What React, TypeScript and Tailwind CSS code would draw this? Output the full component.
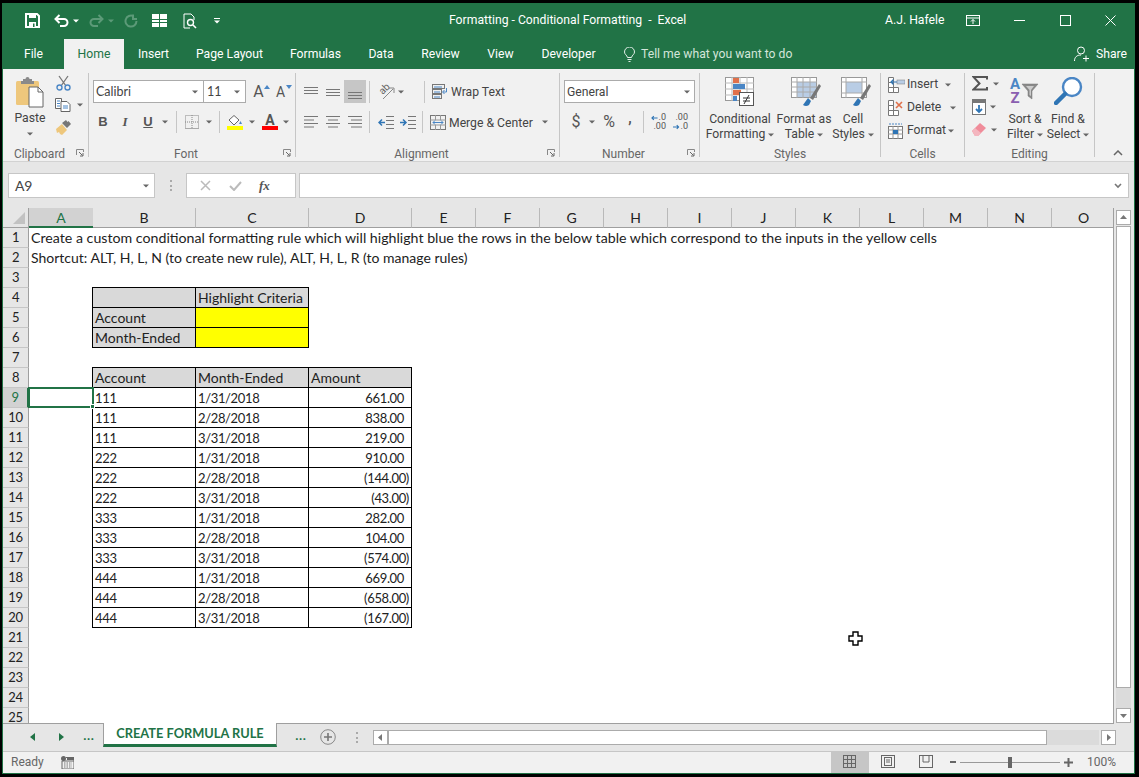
import React from 'react';

const GREEN = '#217346';

const Caret = ({ className = '', color = '#666' }: { className?: string; color?: string }) => (
  <svg width="6" height="4" viewBox="0 0 6 4" className={`shrink-0 ${className}`}>
    <path d="M0 0.5h6L3 3.5z" fill={color} />
  </svg>
);

const Sep = ({ className = '' }: { className?: string }) => <div className={`w-px h-[22px] bg-[#c6c6c6] shrink-0 ${className}`} />;

const Launcher = () => (
  <svg width="8" height="8" viewBox="0 0 8 8" className="shrink-0">
    <path d="M0.5 6V0.5H7.5V3" fill="none" stroke="#888" />
    <path d="M3 3l3.5 3.5M7 4v3H4" fill="none" stroke="#666" />
  </svg>
);

const Group = ({ label, w, children, launcher }: { label: string; w: string; children: React.ReactNode; launcher?: boolean }) => (
  <div className={`${w} h-[84px] mt-[4px] border-r border-[#c6c6c6] flex flex-col shrink-0`}>
    <div className="h-[72px] shrink-0">{children}</div>
    <div className="h-[16px] -mb-[4px] shrink-0 flex items-center relative">
      <span className="flex-1 text-center text-[12px] leading-none pt-px text-[#666]">{label}</span>
      {launcher && <div className="mr-[4px] flex items-center"><Launcher /></div>}
    </div>
  </div>
);

// ---- title bar icons
const SaveIcon = () => (
  <svg width="15" height="15" viewBox="0 0 15 15"><path d="M1 1h11l2 2v11H1z" fill="none" stroke="#fff" strokeWidth="2" /><rect x="4" y="1" width="7" height="4" fill="#fff" /><rect x="4" y="9" width="7" height="5" fill="#fff" /><rect x="8" y="10.5" width="1.5" height="3.5" fill={GREEN} /></svg>
);
const UndoIcon = ({ c = '#fff', flip = false }: { c?: string; flip?: boolean }) => (
  <svg width="15" height="13" viewBox="0 0 15 13" className={flip ? '-scale-x-100' : ''}><path d="M2 5h8a3.5 3.5 0 0 1 0 7H6M5.5 1L1.5 5l4 4" fill="none" stroke={c} strokeWidth="2" /></svg>
);
const RepeatIcon = () => (
  <svg width="14" height="14" viewBox="0 0 14 14"><path d="M9.5 2.2A5.5 5.5 0 1 0 12.5 7M9 0.5V5h4" fill="none" stroke="#5c9a78" strokeWidth="2" /></svg>
);
const FormIcon = () => (
  <svg width="15" height="13" viewBox="0 0 15 13"><path d="M0 0h7v5H0zM8 0h7v5H8zM0 6h7v2H0zM8 6h7v2H8zM0 9h7v4H0zM8 9h7v4H8z" fill="#fff" /></svg>
);
const PreviewIcon = () => (
  <svg width="15" height="16" viewBox="0 0 15 16"><path d="M7 15H1V1h7l3 3v3" fill="none" stroke="#fff" /><circle cx="7.5" cy="9.5" r="3" fill="none" stroke="#fff" strokeWidth="1.4" /><path d="M10 12l3 3" stroke="#fff" strokeWidth="1.6" /></svg>
);
const RibbonDisplay = () => (
  <svg width="14" height="11" viewBox="0 0 14 11"><rect x="0.5" y="0.5" width="13" height="10" fill="none" stroke="#fff" /><path d="M0 3h14" stroke="#fff" /><path d="M7 9V4.5M5 6.5l2-2 2 2" fill="none" stroke="#fff" /></svg>
);

// ---- clipboard icons
const PasteIcon = () => (
  <svg width="30" height="31" viewBox="0 0 30 31">
    <rect x="1" y="4" width="23" height="24" rx="1.5" fill="#eec77c" />
    <path d="M8 4V2h2.5a2 2 0 0 1 4 0H17v2h2v3H6V4z" fill="#8a8a8a" />
    <path d="M14 10h9l5 5v15H14z" fill="#fff" stroke="#666" />
    <path d="M23 10v5h5" fill="none" stroke="#666" />
  </svg>
);
const ScissorsIcon = () => (
  <svg width="15" height="16" viewBox="0 0 15 16"><path d="M3 1l7 10M12 1L5 11" stroke="#777" strokeWidth="1.3" /><circle cx="3.5" cy="12.5" r="2.5" fill="none" stroke="#4a86c5" strokeWidth="1.4" /><circle cx="11.5" cy="12.5" r="2.5" fill="none" stroke="#4a86c5" strokeWidth="1.4" /></svg>
);
const CopyIcon = () => (
  <svg width="16" height="14" viewBox="0 0 16 14"><path d="M0.5 0.5h6v10h-6z" fill="#fff" stroke="#666" /><path d="M6 3.5h6l3 3v7H6z" fill="#fff" stroke="#666" /><path d="M2 3h3M2 5.5h3M2 8h3" stroke="#4a86c5" /><path d="M8 8h5M8 10h5" stroke="#4a86c5" /></svg>
);
const BrushIcon = () => (
  <svg width="16" height="15" viewBox="0 0 16 15"><path d="M0 9l6-5 5 6-5 5-2-1-1-2-2 1z" fill="#eec77c" /><path d="M6 3l4-3 1.5 2 1-1 2.5 3-4 4z" fill="#777" /></svg>
);

// ---- font icons
const FontA = ({ up }: { up: boolean }) => (
  <div className="flex items-start w-[17px] h-[16px] text-[#555]">
    <span className={`${up ? 'text-[16px]' : 'text-[14px]'} leading-[16px] w-[11px] text-center`}>A</span>
    <svg width="6" height="4" viewBox="0 0 6 4" className="mt-[1px]"><path d={up ? 'M0 4l3-4 3 4z' : 'M0 0h6L3 4z'} fill="#4a86c5" /></svg>
  </div>
);
const BordersIcon = () => (
  <svg width="14" height="14" viewBox="0 0 14 14"><rect x="0.5" y="0.5" width="13" height="13" fill="none" stroke="#888" strokeDasharray="1 1" /><path d="M7 0v14M0 7h14" stroke="#888" strokeDasharray="1 1" /><path d="M0 13.5h14" stroke="#aaa" /></svg>
);
const FillIcon = () => (
  <div className="w-[16px] flex flex-col items-center">
    <svg width="15" height="11" viewBox="0 0 15 11"><path d="M6 0.5l5 4.5-5 5-5-5z" fill="#fff" stroke="#666" /><path d="M12.5 6l1.5 3h-3z" fill="#4a86c5" /></svg>
    <div className="w-[16px] h-[4px] bg-[#ffff00]" />
  </div>
);
const ColorA = () => (
  <div className="w-[16px] flex flex-col items-center">
    <span className="text-[14px] leading-[11px] h-[11px] font-bold text-[#555]">A</span>
    <div className="w-[16px] h-[4px] bg-[#ff0000]" />
  </div>
);

// ---- alignment icons
const Lines = ({ rows, w = 14 }: { rows: [number, number][]; w?: number }) => (
  <svg width={w} height="14" viewBox={`0 0 ${w} 14`} className="shrink-0">
    {rows.map(([y, x], i) => <path key={i} d={`M${x} ${y}.5H${w - x}`} stroke="#777" />)}
  </svg>
);
const AlignH = ({ kind }: { kind: 'l' | 'c' | 'r' }) => (
  <svg width="14" height="12" viewBox="0 0 14 12" className="shrink-0">
    {[0.5, 4, 7.5, 11].map((y, i) => {
      const short = i % 2 === 1;
      const x1 = kind === 'l' ? 0 : kind === 'c' ? (short ? 2 : 0) : short ? 3 : 0;
      const x2 = kind === 'l' ? (short ? 10 : 14) : kind === 'c' ? (short ? 12 : 14) : 14;
      return <path key={i} d={`M${x1} ${y}H${x2}`} stroke="#777" />;
    })}
  </svg>
);
const OrientIcon = () => (
  <div className="relative w-[17px] h-[16px]">
    <span className="absolute left-[1px] top-[-1px] text-[10px] leading-[12px] text-[#666] -rotate-45">ab</span>
    <svg width="17" height="16" viewBox="0 0 17 16"><path d="M5 15L15 5M11 4h5v5" fill="none" stroke="#888" /></svg>
  </div>
);
const WrapIcon = () => (
  <svg width="16" height="15" viewBox="0 0 16 15"><rect x="0.5" y="0.5" width="12" height="4" fill="none" stroke="#777" /><rect x="0.5" y="5.5" width="9" height="4" fill="none" stroke="#777" /><rect x="0.5" y="10.5" width="9" height="4" fill="none" stroke="#777" /><path d="M2 3h8M2 8h6M2 13h6" stroke="#4a86c5" /><path d="M14.5 4v4H11M12.5 6L10.5 8l2 2" fill="none" stroke="#4a86c5" /></svg>
);
const MergeIcon = () => (
  <svg width="16" height="15" viewBox="0 0 16 15"><rect x="0.5" y="0.5" width="15" height="14" fill="none" stroke="#777" /><path d="M0 5h16M0 10h16M5.5 0v5M10.5 0v5M5.5 10v5M10.5 10v5" stroke="#999" /><path d="M3 7.5h10M5 5.5l-2 2 2 2M11 5.5l2 2-2 2" fill="none" stroke="#4a86c5" /></svg>
);
const IndentIcon = ({ out }: { out: boolean }) => (
  <svg width="16" height="13" viewBox="0 0 16 13">
    <path d="M8 0.5h8M8 4.5h8M8 8.5h8M8 12.5h8" stroke="#777" />
    <path d={out ? 'M7 6.5H1M4 3.5l-3 3 3 3' : 'M0 6.5h6M3 3.5l3 3-3 3'} fill="none" stroke="#2f75b5" strokeWidth="1.5" />
  </svg>
);

// ---- number icons
const DecIcon = ({ more }: { more: boolean }) => {
  const arrow = (
    <svg width="7" height="6" viewBox="0 0 7 6" className={more ? '' : '-scale-x-100'}><path d="M7 3H1M3 1L1 3l2 2" fill="none" stroke="#2f75b5" strokeWidth="1.2" /></svg>
  );
  return (
    <div className="w-[15px] h-[18px] flex flex-col text-[9px] text-[#555]">
      <div className="h-[9px] leading-[9px] flex items-center justify-end gap-[1px]">{more && arrow}<span>{more ? '.0' : '.00'}</span></div>
      <div className="h-[9px] leading-[9px] flex items-center justify-end gap-[1px]">{!more && arrow}<span>{more ? '.00' : '.0'}</span></div>
    </div>
  );
};

// ---- styles icons
const CondIcon = () => (
  <svg width="30" height="32" viewBox="0 0 30 32">
    <rect x="0.5" y="0.5" width="28" height="23" fill="#fff" stroke="#999" />
    <path d="M0 6h29M0 12h29M0 18h29M7 0v24M15 0v24M22 0v24" stroke="#bbb" />
    <rect x="8" y="1" width="6" height="5" fill="#e0704a" />
    <rect x="8" y="7" width="12" height="5" fill="#4a86c5" />
    <rect x="8" y="13" width="8" height="5" fill="#e0704a" />
    <rect x="8" y="19" width="4" height="5" fill="#4a86c5" />
    <rect x="14.5" y="15.5" width="14" height="13" fill="#fff" stroke="#555" />
    <path d="M18 21h7M18 24h7M24 18l-5 9" stroke="#333" fill="none" />
  </svg>
);
const FormatTableIcon = () => (
  <svg width="30" height="31" viewBox="0 0 30 31">
    <rect x="0.5" y="0.5" width="25" height="20" fill="#fff" stroke="#999" />
    <rect x="6" y="5" width="19" height="15" fill="#b9cde5" />
    <path d="M0 5h26M0 10h26M0 15h26M6 0v21M12 0v21M19 0v21" stroke="#aaa" />
    <path d="M12 28l5-7 3 3-2 4q-3 2-6 0z" fill="#2f75b5" />
    <path d="M19 21l9-14 2 2-8 14z" fill="#777" />
  </svg>
);
const CellStylesIcon = () => (
  <svg width="30" height="31" viewBox="0 0 30 31">
    <rect x="0.5" y="0.5" width="25" height="20" fill="#fff" stroke="#999" />
    <rect x="5" y="5" width="16" height="11" fill="#b9cde5" />
    <path d="M0 5h26M5 0v21M21 0v21M0 16h26" stroke="#aaa" />
    <path d="M12 28l5-7 3 3-2 4q-3 2-6 0z" fill="#2f75b5" />
    <path d="M19 21l9-14 2 2-8 14z" fill="#777" />
  </svg>
);

// ---- cells icons
const CellsIcon = ({ kind }: { kind: 'i' | 'd' | 'f' }) => (
  <svg width="17" height="16" viewBox="0 0 17 16">
    {kind === 'f' ? (
      <>
        <rect x="0.5" y="3.5" width="14" height="12" fill="#fff" stroke="#777" />
        <path d="M0 7h15M0 11h15M5 3v13M10 3v13" stroke="#999" />
        <rect x="5" y="7" width="5" height="4" fill="#2f75b5" />
        <path d="M1 1h13" stroke="#4a86c5" strokeDasharray="2 1" />
      </>
    ) : (
      <>
        <path d="M0.5 0.5h5v5h-5zM0.5 5.5h5v5h-5zM0.5 10.5h5v5h-5zM5.5 10.5h5v5h-5z" fill="#fff" stroke="#777" />
        {kind === 'i' ? (
          <>
            <rect x="9" y="3" width="8" height="4" fill="#b9cde5" stroke="#777" strokeWidth="0.5" />
            <path d="M9 5H3M5.5 2.5L3 5l2.5 2.5" fill="none" stroke="#2f75b5" strokeWidth="1.2" />
          </>
        ) : (
          <path d="M8 2l6 6M14 2l-6 6" stroke="#e0704a" strokeWidth="1.6" />
        )}
      </>
    )}
  </svg>
);

// ---- editing icons
const SigmaIcon = () => (
  <svg width="16" height="15" viewBox="0 0 16 15"><path d="M15 3.5V1H1.5l6 6.5-6 6H15V11" fill="none" stroke="#555" strokeWidth="2" /></svg>
);
const FillDownIcon = () => (
  <svg width="14" height="16" viewBox="0 0 14 16"><rect x="0.5" y="0.5" width="13" height="15" fill="#fff" stroke="#777" /><rect x="0" y="0" width="14" height="4" fill="#777" /><path d="M7 6v7M4 10l3 3 3-3" fill="none" stroke="#2f75b5" strokeWidth="1.8" /></svg>
);
const EraserIcon = () => (
  <svg width="14" height="13" viewBox="0 0 14 13"><path d="M0 8l8-8 6 5-8 8H3z" fill="#f08c9a" /><path d="M0 8l3-3 6 5-3 3H3z" fill="#f4b6bf" /></svg>
);
const SortIcon = () => (
  <div className="flex w-[32px] h-[30px]">
    <div className="w-[12px] flex flex-col items-center font-bold text-[15px]">
      <span className="h-[14px] leading-[14px] text-[#4a86c5]">A</span>
      <span className="h-[14px] leading-[14px] text-[#8a5fb0]">Z</span>
    </div>
    <svg width="18" height="18" viewBox="0 0 18 18" className="mt-[6px]">
      <path d="M1 1h16l-6 7v8l-4-3V8z" fill="#8a8a8a" stroke="#777" strokeWidth="0.5" />
      <path d="M5 3h8l-3 4v6l-1.500-1V7z" fill="#ccc" />
    </svg>
  </div>
);
const FindIcon = () => (
  <svg width="29" height="28" viewBox="0 0 29 28"><circle cx="18" cy="10" r="9" fill="#fff" stroke="#4a86c5" strokeWidth="2.4" /><path d="M11 17L2 26" stroke="#2f75b5" strokeWidth="4.5" strokeLinecap="round" /></svg>
);

// ---- status icons
const MacroIcon = () => (
  <svg width="13" height="13" viewBox="0 0 13 13"><circle cx="2.5" cy="2.5" r="2.5" fill="#666" /><path d="M5 1.5h8V5H1v8h12V5" fill="none" stroke="#666" /><path d="M3 7h8M3 9h8M3 11h8" stroke="#777" strokeDasharray="1.5 1" /><rect x="6" y="1" width="7" height="3" fill="#666" /></svg>
);
const ViewNormal = () => (
  <svg width="14" height="14" viewBox="0 0 14 14"><rect x="0.5" y="0.5" width="12" height="12" fill="none" stroke="#666" /><path d="M4.500 0v13M8.500 0v13M0 4.500h13M0 8.500h13" stroke="#666" /></svg>
);
const ViewLayout = () => (
  <svg width="14" height="14" viewBox="0 0 14 14"><rect x="0.5" y="0.5" width="13" height="12" fill="none" stroke="#666" /><rect x="3.5" y="2.5" width="7" height="8" fill="none" stroke="#666" /><path d="M5 5h4M5 7h4" stroke="#666" /></svg>
);
const ViewBreak = () => (
  <svg width="14" height="14" viewBox="0 0 14 14"><rect x="0.5" y="0.5" width="13" height="12" fill="none" stroke="#666" /><path d="M4 0v7h6V0" fill="none" stroke="#666" /></svg>
);

const ScrollBtn = ({ d, className = '' }: { d: string; className?: string }) => (
  <div className={`w-[15px] h-[15px] bg-white border border-[#ababab] flex items-center justify-center shrink-0 ${className}`}>
    <svg width="7" height="7" viewBox="0 0 7 7"><path d={d} fill="#777" /></svg>
  </div>
);

const BigLabel = ({ a, b, caret }: { a: string; b: string; caret?: boolean }) => (
  <div className="flex flex-col items-center text-[12.2px] leading-[15px] text-[#444] whitespace-nowrap mt-[3px]">
    <span>{a}</span>
    <span className="flex items-center gap-[3px]">{b}{caret && <Caret />}</span>
  </div>
);

const TABS: [string, string][] = [
  ['File', 'w-[61px]'], ['Home', 'w-[60px]'], ['Insert', 'w-[59px]'], ['Page Layout', 'w-[93px]'], ['Formulas', 'w-[79px]'],
  ['Data', 'w-[52px]'], ['Review', 'w-[67px]'], ['View', 'w-[53px]'], ['Developer', 'w-[83px]'],
];

const COLS = ['A', 'B', 'C', 'D', 'E', 'F', 'G', 'H', 'I', 'J', 'K', 'L', 'M', 'N', 'O'];

const DATA: [string, string, string][] = [
  ['111', '1/31/2018', '661.00'], ['111', '2/28/2018', '838.00'], ['111', '3/31/2018', '219.00'],
  ['222', '1/31/2018', '910.00'], ['222', '2/28/2018', '(144.00)'], ['222', '3/31/2018', '(43.00)'],
  ['333', '1/31/2018', '282.00'], ['333', '2/28/2018', '104.00'], ['333', '3/31/2018', '(574.00)'],
  ['444', '1/31/2018', '669.00'], ['444', '2/28/2018', '(658.00)'], ['444', '3/31/2018', '(167.00)'],
];

// one boxed table cell, black line on all sides like an Excel "all borders" range
const Cell = ({ row, col, text = '', fill = '', right = false, pad = false, num = false }: { row: number; col: number; text?: string; fill?: string; right?: boolean; pad?: boolean; num?: boolean }) => (
  <div
    style={{ gridRow: row + 1, gridColumn: col + 1 }}
    className={`border-r border-b border-black shadow-[-1px_0_0_#000,0_-1px_0_#000,-1px_-1px_0_#000] flex items-center ${num ? 'pt-[3px] text-[13px] tracking-[-0.35px]' : ''} ${fill} ${right ? `justify-end ${pad ? 'pr-[7px]' : 'pr-[2px]'}` : 'pl-[2px]'}`}
  >
    {text}
  </div>
);

export default function App() {
  return (
    <div className="w-[1139px] h-[777px] bg-black pt-[3px] pl-[2px] pr-[4px] pb-[3px] overflow-hidden font-['Roboto',sans-serif]">
      <div className="relative h-[771px] flex flex-col border-l border-r border-b border-[#217346] bg-[#e6e6e6]">
        {/* title bar */}
        <div className="h-[35px] bg-[#217346] flex items-center text-white shrink-0 text-[12.2px]">
          <div className="w-[446px] flex items-center shrink-0">
            <div className="ml-[22px]"><SaveIcon /></div>
            <div className="ml-[14px]"><UndoIcon /></div>
            <Caret className="ml-[4px]" color="#fff" />
            <div className="ml-[10px]"><UndoIcon c="#5c9a78" flip /></div>
            <Caret className="ml-[4px]" color="#5c9a78" />
            <div className="ml-[10px]"><RepeatIcon /></div>
            <div className="ml-[14px]"><FormIcon /></div>
            <div className="ml-[16px]"><PreviewIcon /></div>
            <div className="ml-[16px] flex flex-col items-center gap-[1px]"><div className="w-[6px] h-px bg-white" /><Caret color="#fff" /></div>
          </div>
          <div className="w-[436px] shrink-0 whitespace-pre">Formatting - Conditional Formatting  -  Excel</div>
          <div className="w-[81px] shrink-0">A.J. Hafele</div>
          <RibbonDisplay />
          <div className="ml-[34px] w-[11px] h-px bg-white" />
          <div className="ml-[35px] w-[11px] h-[11px] border border-white" />
          <svg className="ml-[34px]" width="11" height="11" viewBox="0 0 11 11"><path d="M0.5 0.5l10 10M10.5 0.5l-10 10" stroke="#fff" /></svg>
        </div>

        {/* tab row */}
        <div className="h-[31px] bg-[#217346] flex items-end shrink-0 text-[12.2px] text-white whitespace-nowrap">
          {TABS.map(([t, w]) => (
            <div key={t} className={`${w} h-[30px] flex items-center justify-center shrink-0 ${t === 'Home' ? 'bg-[#f1f1f1] text-[#217346]' : ''}`}>{t}</div>
          ))}
          <div className="h-[30px] flex items-center ml-[14px]">
            <svg width="11" height="15" viewBox="0 0 11 15"><path d="M3.5 10.5C3 8 .5 7.5.5 5a5 5 0 0 1 10 0c0 2.5-2.5 3-3 5.5zM3.5 12.5h4M4.5 14.5h2" fill="none" stroke="#e4efe9" /></svg>
            <span className="ml-[6px] text-[#d3e5da]">Tell me what you want to do</span>
          </div>
          <div className="h-[30px] flex-1 flex items-center justify-end pr-[7px]">
            <svg width="16" height="16" viewBox="0 0 16 16"><circle cx="7" cy="4.5" r="3.5" fill="none" stroke="#fff" /><path d="M0.5 15c0-4 2.5-6 6.5-6M9 12.500h6M12 9.500v6" fill="none" stroke="#fff" /></svg>
            <span className="ml-[6px]">Share</span>
          </div>
        </div>

        {/* ribbon */}
        <div className="h-[93px] bg-[#f1f1f1] border-b border-[#d2d2d2] flex shrink-0 text-[12.2px] text-[#444] relative">
          <Group label="Clipboard" w="w-[86px]" launcher>
            <div className="flex">
              <div className="w-[42px] ml-[6px] flex flex-col items-center">
                <div className="mt-[4px] h-[31px]"><PasteIcon /></div>
                <div className="mt-[2px] leading-[16px]">Paste</div>
                <Caret className="mt-[6px]" />
              </div>
              <div className="ml-[4px] flex flex-col">
                <div className="mt-[2px] ml-[1px]"><ScissorsIcon /></div>
                <div className="mt-[7px] flex items-center"><CopyIcon /><Caret className="ml-[6px]" /></div>
                <div className="mt-[8px] ml-[1px]"><BrushIcon /></div>
              </div>
            </div>
          </Group>

          <Group label="Font" w="w-[207px]" launcher>
            <div className="pt-[7px]">
              <div className="flex items-center h-[23px]">
                <div className="ml-[4px] w-[111px] h-[23px] bg-white border border-[#ababab] flex items-center justify-between pl-[2px] pr-[5px]"><span className="font-['Lato',sans-serif] text-[12.5px] pt-px">Calibri</span><Caret /></div>
                <div className="w-[43px] h-[23px] bg-white border border-[#ababab] -ml-px flex items-center justify-between pl-[3px] pr-[5px]"><span className="font-['Lato',sans-serif] text-[12.5px] pt-px">11</span><Caret /></div>
                <div className="ml-[7px]"><FontA up /></div>
                <div className="ml-[5px]"><FontA up={false} /></div>
              </div>
              <div className="flex items-center h-[22px] mt-[8px]">
                <span className="ml-[8px] w-[12px] text-center font-bold text-[13px] font-['Liberation_Sans',sans-serif] text-[#555]">B</span>
                <span className="ml-[10px] w-[12px] text-center italic font-bold text-[13px] font-['Liberation_Serif',serif] text-[#555]">I</span>
                <span className="ml-[11px] w-[12px] text-center underline font-bold text-[13px] font-['Liberation_Sans',sans-serif] text-[#555]">U</span>
                <Caret className="ml-[8px]" />
                <Sep className="ml-[8px]" />
                <div className="ml-[8px]"><BordersIcon /></div>
                <Caret className="ml-[7px]" />
                <Sep className="ml-[7px]" />
                <div className="ml-[7px]"><FillIcon /></div>
                <Caret className="ml-[6px]" />
                <div className="ml-[7px]"><ColorA /></div>
                <Caret className="ml-[5px]" />
              </div>
            </div>
          </Group>

          <Group label="Alignment" w="w-[264px]" launcher>
            <div className="pt-[7px]">
              <div className="flex items-center h-[23px]">
                <div className="ml-[8px]"><Lines rows={[[2, 0], [5, 0], [8, 0]]} /></div>
                <div className="ml-[8px] mt-[3px]"><Lines rows={[[3, 0], [6, 0], [9, 0]]} /></div>
                <div className="ml-[4px] w-[22px] h-[23px] bg-[#c6c6c6] flex items-end justify-center pb-[2px]"><Lines rows={[[5, 0], [8, 0], [11, 0]]} /></div>
                <Sep className="ml-[3px]" />
                <div className="ml-[8px]"><OrientIcon /></div>
                <Caret className="ml-[3px]" />
                <Sep className="ml-[20px]" />
                <div className="ml-[7px]"><WrapIcon /></div>
                <span className="ml-[3px] pt-px">Wrap Text</span>
              </div>
              <div className="flex items-center h-[22px] mt-[8px]">
                <div className="ml-[8px]"><AlignH kind="l" /></div>
                <div className="ml-[8px]"><AlignH kind="c" /></div>
                <div className="ml-[8px]"><AlignH kind="r" /></div>
                <Sep className="ml-[7px]" />
                <div className="ml-[8px]"><IndentIcon out /></div>
                <div className="ml-[6px]"><IndentIcon out={false} /></div>
                <Sep className="ml-[6px]" />
                <div className="ml-[7px]"><MergeIcon /></div>
                <span className="ml-[3px] pt-[3px]">Merge &amp; Center</span>
                <Caret className="ml-[9px]" />
              </div>
            </div>
          </Group>

          <Group label="Number" w="w-[140px]" launcher>
            <div className="pt-[7px]">
              <div className="ml-[4px] w-[131px] h-[23px] bg-white border border-[#ababab] flex items-center justify-between pl-[2px] pr-[4px]"><span className="pt-px">General</span><Caret /></div>
              <div className="flex items-center h-[22px] mt-[8px]">
                <span className="ml-[11px] w-[10px] text-center text-[16px] leading-[22px] text-[#555]">$</span>
                <Caret className="ml-[8px]" />
                <span className="ml-[6px] w-[16px] text-center text-[16px] leading-[22px] text-[#555]">%</span>
                <span className="ml-[10px] w-[6px] h-[22px] text-center font-bold text-[14px] leading-[14px] text-[#555]">,</span>
                <Sep className="ml-[10px]" />
                <div className="ml-[7px]"><DecIcon more /></div>
                <div className="ml-[7px]"><DecIcon more={false} /></div>
              </div>
            </div>
          </Group>

          <Group label="Styles" w="w-[181px]">
            <div className="flex pt-[4px]">
              <div className="w-[76px] ml-[2px] flex flex-col items-center">
                <div className="h-[32px]"><CondIcon /></div>
                <BigLabel a="Conditional" b="Formatting" caret />
              </div>
              <div className="w-[52px] flex flex-col items-center">
                <div className="h-[32px] ml-[3px]"><FormatTableIcon /></div>
                <BigLabel a="Format as" b="Table" caret />
              </div>
              <div className="w-[46px] flex flex-col items-center">
                <div className="h-[32px] ml-[5px]"><CellStylesIcon /></div>
                <BigLabel a="Cell" b="Styles" caret />
              </div>
            </div>
          </Group>

          <Group label="Cells" w="w-[84px]">
            <div className="flex flex-col pl-[7px]">
              <div className="h-[23px] flex items-center"><CellsIcon kind="i" /><span className="ml-[2px]">Insert</span><Caret className="ml-[7px]" /></div>
              <div className="h-[23px] flex items-center"><CellsIcon kind="d" /><span className="ml-[2px]">Delete</span><Caret className="ml-[9px]" /></div>
              <div className="h-[23px] flex items-center"><CellsIcon kind="f" /><span className="ml-[2px]">Format</span><Caret className="ml-[2px]" /></div>
            </div>
          </Group>

          <Group label="Editing" w="w-[130px]">
            <div className="flex">
              <div className="flex flex-col -mt-px pl-[7px] w-[38px] shrink-0">
                <div className="h-[23px] flex items-center"><SigmaIcon /><Caret className="ml-[5px]" /></div>
                <div className="h-[23px] flex items-center"><FillDownIcon /><Caret className="ml-[4px]" /></div>
                <div className="h-[23px] flex items-center"><EraserIcon /><Caret className="ml-[5px]" /></div>
              </div>
              <div className="w-[44px] flex flex-col items-center pt-[4px] shrink-0">
                <div className="h-[32px]"><SortIcon /></div>
                <BigLabel a="Sort &" b="Filter" caret />
              </div>
              <div className="w-[42px] flex flex-col items-center pt-[4px] shrink-0">
                <div className="h-[32px]"><FindIcon /></div>
                <BigLabel a="Find &" b="Select" caret />
              </div>
            </div>
          </Group>

          <div className="flex-1 flex items-end justify-end pb-[5px] pr-[11px]">
            <svg width="10" height="6" viewBox="0 0 10 6"><path d="M1 5l4-4 4 4" fill="none" stroke="#666" strokeWidth="1.5" /></svg>
          </div>
        </div>

        {/* formula bar */}
        <div className="h-[46px] flex items-start pt-[11px] shrink-0 text-[12px] text-[#444]">
          <div className="ml-[5px] w-[147px] h-[25px] bg-white border border-[#c6c6c6] flex items-center justify-between pl-[6px] pr-[5px] font-['Lato',sans-serif] text-[14px] tracking-[-0.3px]"><span>A9</span><Caret /></div>
          <div className="ml-[15px] w-[2px] h-[11px] mt-[7px] border-l-2 border-dotted border-[#aaa]" />
          <div className="ml-[14px] w-[110px] h-[25px] bg-white border border-[#c6c6c6] flex items-center">
            <svg className="ml-[13px]" width="11" height="11" viewBox="0 0 11 11"><path d="M1 1l9 9M10 1l-9 9" stroke="#bbb" strokeWidth="1.5" /></svg>
            <svg className="ml-[18px]" width="13" height="10" viewBox="0 0 13 10"><path d="M1 5l4 4 7-8" fill="none" stroke="#bbb" strokeWidth="2" /></svg>
            <span className="ml-[17px] italic font-bold font-['Liberation_Serif',serif] text-[13px] text-[#555]">fx</span>
          </div>
          <div className="ml-[3px] w-[830px] h-[25px] bg-white border border-[#c6c6c6] flex items-center justify-end pr-[6px]">
            <svg width="8" height="6" viewBox="0 0 8 6"><path d="M1 1l3 3 3-3" fill="none" stroke="#777" strokeWidth="1.6" /></svg>
          </div>
        </div>

        {/* sheet + vertical scrollbar */}
        <div className="h-[516px] flex shrink-0">
          <div className="w-[1111px] h-[516px] border-r border-b border-[#9f9f9f] overflow-hidden bg-white shrink-0">
            <div className="grid grid-cols-[26px_64px_103px_113px_103px_repeat(11,64px)] grid-rows-[20px_repeat(25,20px)] font-['Lato',sans-serif] text-[14px] text-[#222]">
              <div className="bg-[#e6e6e6] border-r border-b border-[#9f9f9f] flex items-end justify-end p-[3px]">
                <svg width="12" height="12" viewBox="0 0 12 12"><path d="M12 0v12H0z" fill="#c2c2c2" /></svg>
              </div>
              {COLS.map((c) => (
                <div key={c} className={`flex items-center justify-center border-b ${c === 'A' ? 'bg-[#d2d2d2] text-[#217346] border-b-2 border-[#217346]' : 'bg-[#e6e6e6] border-r border-r-[#b9b9b9] border-b-[#9f9f9f]'}`}>{c}</div>
              ))}
              {Array.from({ length: 25 }, (_, i) => i + 1).map((n) => (
                <div key={n} style={{ gridRow: n + 1, gridColumn: 1 }} className={`flex items-center justify-center border-b border-[#c6c6c6] text-[13px] tracking-[-0.3px] ${n === 9 ? 'bg-[#d2d2d2] text-[#217346] border-r-2 border-r-[#217346]' : 'bg-[#e6e6e6] border-r border-r-[#9f9f9f]'}`}>{n}</div>
              ))}

              <div style={{ gridRow: 2, gridColumn: '2 / 17' }} className="pl-[2px] flex items-center whitespace-nowrap text-[14.2px]">Create a custom conditional formatting rule which will highlight blue the rows in the below table which correspond to the inputs in the yellow cells</div>
              <div style={{ gridRow: 3, gridColumn: '2 / 17' }} className="pl-[2px] pb-[2px] flex items-center whitespace-nowrap">Shortcut: ALT, H, L, N (to create new rule), ALT, H, L, R (to manage rules)</div>

              <Cell row={4} col={2} fill="bg-[#d9d9d9]" />
              <Cell row={4} col={3} text="Highlight Criteria" fill="bg-[#d9d9d9]" />
              <Cell row={5} col={2} text="Account" fill="bg-[#d9d9d9]" />
              <Cell row={5} col={3} fill="bg-[#ffff00]" />
              <Cell row={6} col={2} text="Month-Ended" fill="bg-[#d9d9d9]" />
              <Cell row={6} col={3} fill="bg-[#ffff00]" />

              <Cell row={8} col={2} text="Account" fill="bg-[#d9d9d9]" />
              <Cell row={8} col={3} text="Month-Ended" fill="bg-[#d9d9d9]" />
              <Cell row={8} col={4} text="Amount" fill="bg-[#d9d9d9]" />
              {DATA.map(([a, m, v], i) => (
                <React.Fragment key={i}>
                  <Cell row={9 + i} col={2} text={a} num />
                  <Cell row={9 + i} col={3} text={m} num />
                  <Cell row={9 + i} col={4} text={v} right pad={!v.startsWith('(')} num />
                </React.Fragment>
              ))}

              {/* active cell A9 */}
              <div style={{ gridRow: 10, gridColumn: 2 }} className="relative z-10 border-2 border-[#217346] -mt-px -ml-px -mr-px">
                <div className="absolute -right-[3px] -bottom-[3px] w-[5px] h-[5px] bg-[#217346] border border-white" />
              </div>
            </div>
          </div>
          <div className="flex-1 flex flex-col pl-[2px] pt-[2px] pb-[1px]">
            <ScrollBtn d="M0 5l3.500-4L7 5z" />
            <div className="w-[15px] flex-1 flex flex-col mt-[1px]">
              <div className="h-[462px] bg-white border border-[#ababab] shrink-0" />
              <div className="flex-1 bg-[#dbdbdb]" />
            </div>
            <ScrollBtn d="M0 2l3.500 4L7 2z" />
          </div>
        </div>

        {/* sheet tabs + horizontal scrollbar */}
        <div className="h-[27px] flex items-start shrink-0">
          <svg className="ml-[27px] mt-[9px]" width="6" height="8" viewBox="0 0 6 8"><path d="M5 0v8L0 4z" fill={GREEN} /></svg>
          <svg className="ml-[23px] mt-[9px]" width="6" height="8" viewBox="0 0 6 8"><path d="M0 0v8l5-4z" fill={GREEN} /></svg>
          <span className="ml-[18px] w-[12px] text-[13px] font-bold leading-[24px] text-[#217346]">...</span>
          <div className="ml-[8px] w-[174px] h-[24px] -mt-px bg-white border-l border-r border-[#9f9f9f] border-b-[3px] border-b-[#217346] flex items-center justify-center text-[12.8px] font-bold text-[#217346] font-['Lato',sans-serif] whitespace-nowrap">CREATE FORMULA RULE</div>
          <span className="ml-[18px] w-[12px] text-[13px] font-bold leading-[24px] text-[#217346]">...</span>
          <svg className="ml-[13px] mt-[5px]" width="16" height="16" viewBox="0 0 16 16"><circle cx="8" cy="8" r="7.3" fill="none" stroke="#888" /><path d="M8 4v8M4 8h8" stroke="#777" strokeWidth="1.6" /></svg>
          <div className="ml-[20px] mt-[8px] w-[2px] h-[11px] border-l-2 border-dotted border-[#aaa]" />
          <div className="ml-[15px] mt-[6px] w-[743px] flex h-[15px]">
            <ScrollBtn d="M5 0v7L1 3.500z" />
            <div className="w-[659px] h-[15px] bg-white border border-[#ababab] shrink-0" />
            <div className="flex-1 bg-[#dbdbdb]" />
            <ScrollBtn d="M2 0v7l4-3.500z" className="ml-[2px]" />
          </div>
        </div>

        {/* status bar */}
        <div className="h-[22px] border-t border-[#c6c6c6] bg-[#f1f1f1] flex items-center pb-[1px] shrink-0 text-[12px] text-[#666]">
          <span className="ml-[8px] w-[50px]">Ready</span>
          <MacroIcon />
          <div className="ml-[757px] w-[38px] h-[21px] bg-[#c6c6c6] flex items-center justify-center"><ViewNormal /></div>
          <div className="ml-[12px]"><ViewLayout /></div>
          <div className="ml-[24px]"><ViewBreak /></div>
          <div className="ml-[17px] w-[6px] h-[2px] bg-[#666]" />
          <div className="ml-[4px] w-[100px] h-px bg-[#999] flex items-center justify-center"><div className="w-[4px] h-[11px] bg-[#666]" /></div>
          <svg className="ml-[4px]" width="9" height="9" viewBox="0 0 9 9"><path d="M0 4.500h9M4.500 0v9" stroke="#666" strokeWidth="2" /></svg>
          <span className="ml-[14px]">100%</span>
        </div>

        {/* mouse pointer */}
        <svg className="absolute left-[845px] top-[628px]" width="15" height="15" viewBox="0 0 15 15">
          <path d="M5 1h5v4h4v5h-4v4H5v-4H1V5h4z" fill="#fff" stroke="#000" strokeWidth="1.4" />
        </svg>
      </div>
    </div>
  );
}
